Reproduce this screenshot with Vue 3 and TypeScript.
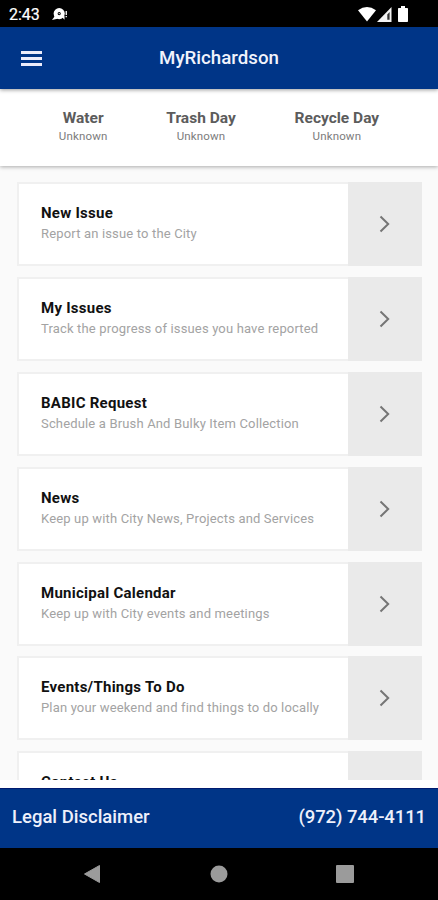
<script setup lang="ts">
interface PickupInfo {
  label: string
  value: string
}

interface MenuEntry {
  title: string
  description?: string
}

const pickups: PickupInfo[] = [
  { label: 'Water', value: 'Unknown' },
  { label: 'Trash Day', value: 'Unknown' },
  { label: 'Recycle Day', value: 'Unknown' },
]

const entries: MenuEntry[] = [
  { title: 'New Issue', description: 'Report an issue to the City' },
  { title: 'My Issues', description: 'Track the progress of issues you have reported' },
  { title: 'BABIC Request', description: 'Schedule a Brush And Bulky Item Collection' },
  { title: 'News', description: 'Keep up with City News, Projects and Services' },
  { title: 'Municipal Calendar', description: 'Keep up with City events and meetings' },
  { title: 'Events/Things To Do', description: 'Plan your weekend and find things to do locally' },
  { title: 'Contact Us' },
]
</script>

<template>
  <div class="screen">
    <div class="status">
      <span class="clock">2:43</span>
      <svg class="notice" width="17" height="14" viewBox="0 0 17 14">
        <path d="M3.2 8.6 0 13l5.6-1.200z" fill="#fff" />
        <circle cx="7.200" cy="6.600" r="3.600" fill="none" stroke="#fff" stroke-width="4" />
        <circle cx="7.200" cy="6.600" r="0.700" fill="#fff" />
        <path d="M9.500 9.500 12.500 12.800V9zM13.600 4h1.300v4h-1.300zM13.600 9h1.300v1.300h-1.300z" fill="#fff" />
      </svg>
      <div class="signals">
        <svg width="18" height="15" viewBox="0 0 18 15">
          <path d="M0 3.2Q9-3.2 18 3.2L9 14.6z" fill="#fff" />
        </svg>
        <svg width="15" height="15" viewBox="0 0 15 15">
          <path d="M14.500 0v15H0z" fill="#f4f4f4" />
          <path d="M10.300 7.500 12.600 5v7.800h-2.300z" fill="#333" />
        </svg>
        <svg class="battery" width="10" height="16" viewBox="0 0 10 16">
          <path d="M3 0h4v2h2.200q.8 0 .8.8v12.400q0 .8-.8.8H.8Q0 16 0 15.200V2.800Q0 2 .8 2H3z" fill="#fff" />
        </svg>
      </div>
    </div>

    <header class="appbar">
      <button class="menu" aria-label="Menu">
        <i></i><i></i><i></i>
      </button>
      <h1>MyRichardson</h1>
    </header>

    <section class="pickups">
      <div v-for="p in pickups" :key="p.label" class="pickup">
        <strong>{{ p.label }}</strong>
        <span>{{ p.value }}</span>
      </div>
    </section>

    <main class="list">
      <article v-for="e in entries" :key="e.title" class="card">
        <div class="copy">
          <h2>{{ e.title }}</h2>
          <p v-if="e.description">{{ e.description }}</p>
        </div>
        <div class="go">
          <svg width="12" height="18" viewBox="0 0 12 18">
            <path d="M1.500 1.500 9.200 9 1.500 16.500" fill="none" stroke="#757575" stroke-width="2" />
          </svg>
        </div>
      </article>
    </main>

    <footer class="footer">
      <span class="legal">Legal Disclaimer</span>
      <span class="phone">(972) 744-4111</span>
    </footer>

    <nav class="nav">
      <svg width="18" height="20" viewBox="0 0 18 20"><path d="M16.500 1.500v17L1.500 10z" fill="#9b9b9b" stroke="#9b9b9b" stroke-linejoin="round" /></svg>
      <svg width="18" height="18" viewBox="0 0 18 18"><circle cx="9" cy="9" r="8.500" fill="#9b9b9b" /></svg>
      <svg width="18" height="18" viewBox="0 0 18 18"><rect width="18" height="18" rx="1" fill="#9b9b9b" /></svg>
    </nav>
  </div>
</template>

<style>
body {
  margin: 0;
  background: #fff;
}
</style>

<style scoped>
.screen {
  width: 438px;
  height: 900px;
  display: flex;
  flex-direction: column;
  overflow: hidden;
  background: #fff;
  font-family: Roboto, sans-serif;
}

.status {
  flex: none;
  height: 27px;
  box-sizing: border-box;
  display: flex;
  align-items: center;
  padding: 1px 30px 0 9px;
  background: #000;
  color: #fff;
}

.clock {
  width: 43px;
  padding-top: 1px;
  font-size: 16px;
  line-height: 18px;
  font-weight: 400;
  -webkit-text-stroke: 0.2px #fff;
  white-space: nowrap;
}

.signals {
  margin-left: auto;
  display: flex;
  align-items: center;
  gap: 1px;
}

.battery {
  margin-left: 5px;
}

.appbar {
  flex: none;
  height: 62px;
  position: relative;
  z-index: 2;
  display: grid;
  grid-template-columns: 1fr auto 1fr;
  align-items: center;
  background: #003587;
  box-shadow: 0 1px 4px rgba(0, 0, 0, 0.4);
}

.menu {
  width: 21px;
  margin: 0 0 0 21px;
  padding: 0;
  border: 0;
  background: none;
  display: flex;
  flex-direction: column;
  gap: 3px;
}

.menu i {
  height: 3px;
  background: #ececfb;
}

.appbar h1 {
  margin: 0 0 1px;
  color: #f1f3fc;
  font-size: 18.700px;
  line-height: 24px;
  font-weight: 500;
  white-space: nowrap;
}

.pickups {
  flex: none;
  height: 77px;
  box-sizing: border-box;
  position: relative;
  z-index: 1;
  display: flex;
  justify-content: space-evenly;
  padding-top: 20px;
  background: #fff;
  box-shadow: 0 1px 4px rgba(0, 0, 0, 0.32);
}

.pickup {
  display: flex;
  flex-direction: column;
  align-items: center;
  white-space: nowrap;
}

.pickup strong {
  color: #5c5c5c;
  font-size: 15.500px;
  line-height: 18px;
  font-weight: 700;
}

.pickup span {
  color: #7c7c7c;
  font-size: 11.500px;
  line-height: 18px;
  letter-spacing: 0.160px;
}

.list {
  flex: none;
  height: 614px;
  box-sizing: border-box;
  display: flex;
  flex-direction: column;
  gap: 10.800px;
  padding: 16.400px 16px 0 17px;
  overflow: hidden;
  background: #fafafa;
}

.card {
  flex: none;
  height: 84px;
  box-sizing: border-box;
  display: flex;
  border: 2px solid #f0f0f0;
  border-right: 0;
  background: #fff;
}

.copy {
  flex: 1;
  padding: 19px 0 0 22px;
  white-space: nowrap;
}

.copy h2 {
  margin: 0;
  color: #111;
  font-size: 15px;
  line-height: 20px;
  font-weight: 700;
  letter-spacing: 0.260px;
}

.copy p {
  margin: 1px 0 0;
  color: #a3a3a3;
  font-size: 13px;
  line-height: 20px;
  letter-spacing: 0.160px;
}

.go {
  width: 74px;
  margin: -2px 0;
  display: flex;
  align-items: center;
  justify-content: center;
  background: #eaeaea;
}

.footer {
  flex: none;
  height: 60px;
  margin-top: 8px;
  box-sizing: border-box;
  display: flex;
  align-items: center;
  justify-content: space-between;
  padding: 0 12px 4px;
  background: #003587;
  border-top: 1px solid #001b70;
  color: #eef0fb;
  font-size: 18.500px;
  line-height: 24px;
  font-weight: 500;
  white-space: nowrap;
}

.phone {
  letter-spacing: -0.100px;
}

.nav {
  flex: none;
  height: 52px;
  display: flex;
  align-items: center;
  justify-content: space-between;
  padding: 0 84px 0 83px;
  background: #000;
}
</style>
